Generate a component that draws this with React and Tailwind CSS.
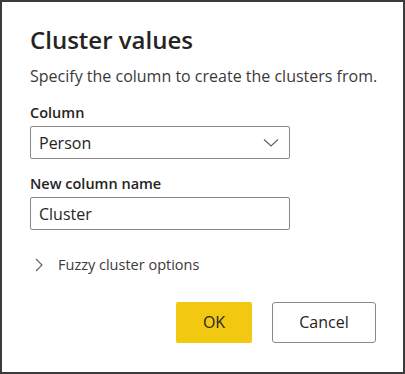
export default function App() {
  return (
    <div
      className="w-[405px] h-[374px] border-2 border-[#3b3b3b] bg-white text-[#252423] flex flex-col pl-[28px] pr-[27px] pt-[20px]"
      style={{ fontFamily: '"Open Sans", "Noto Sans", sans-serif' }}
    >
      <h1 className="text-[24px] leading-[36px] font-semibold text-[#252423]">Cluster values</h1>
      <p className="mt-[7px] text-[16px] leading-[22px] text-[#3b3a39] whitespace-nowrap">
        Specify the column to create the clusters from.
      </p>

      <label className="mt-[16px] text-[14.5px] leading-[20px] font-semibold">Column</label>
      <div className="mt-[3px] w-[260px] h-[33px] border border-[#8a8886] rounded-[2px] flex items-center justify-between pl-[8px] pr-[10px]">
        <span className="text-[16px] text-[#252423]">Person</span>
        <svg width="16" height="10" viewBox="0 0 16 10" fill="none">
          <path d="M1 1.5 L8 8 L15 1.5" stroke="#605e5c" strokeWidth="1.1" />
        </svg>
      </div>

      <label className="mt-[15px] text-[14.5px] leading-[20px] font-semibold">New column name</label>
      <div className="mt-[3px] w-[260px] h-[33px] border border-[#8a8886] rounded-[2px] flex items-center pl-[8px]">
        <span className="text-[16px] text-[#252423]">Cluster</span>
      </div>

      <div className="mt-[24px] flex items-center gap-[15px] pl-[5px]">
        <svg width="8" height="14" viewBox="0 0 8 14" fill="none">
          <path d="M1 1 L7 7 L1 13" stroke="#605e5c" strokeWidth="1.1" />
        </svg>
        <span className="text-[14.5px] text-[#3b3a39]">Fuzzy cluster options</span>
      </div>

      <div className="mt-[26px] flex justify-end gap-[20px]">
        <button className="w-[76px] h-[41px] bg-[#f2c811] rounded-[2px] text-[16px] text-[#252423]">OK</button>
        <button className="w-[104px] h-[41px] border border-[#8a8886] rounded-[3px] bg-white text-[16px] text-[#252423]">
          Cancel
        </button>
      </div>
    </div>
  );
}
